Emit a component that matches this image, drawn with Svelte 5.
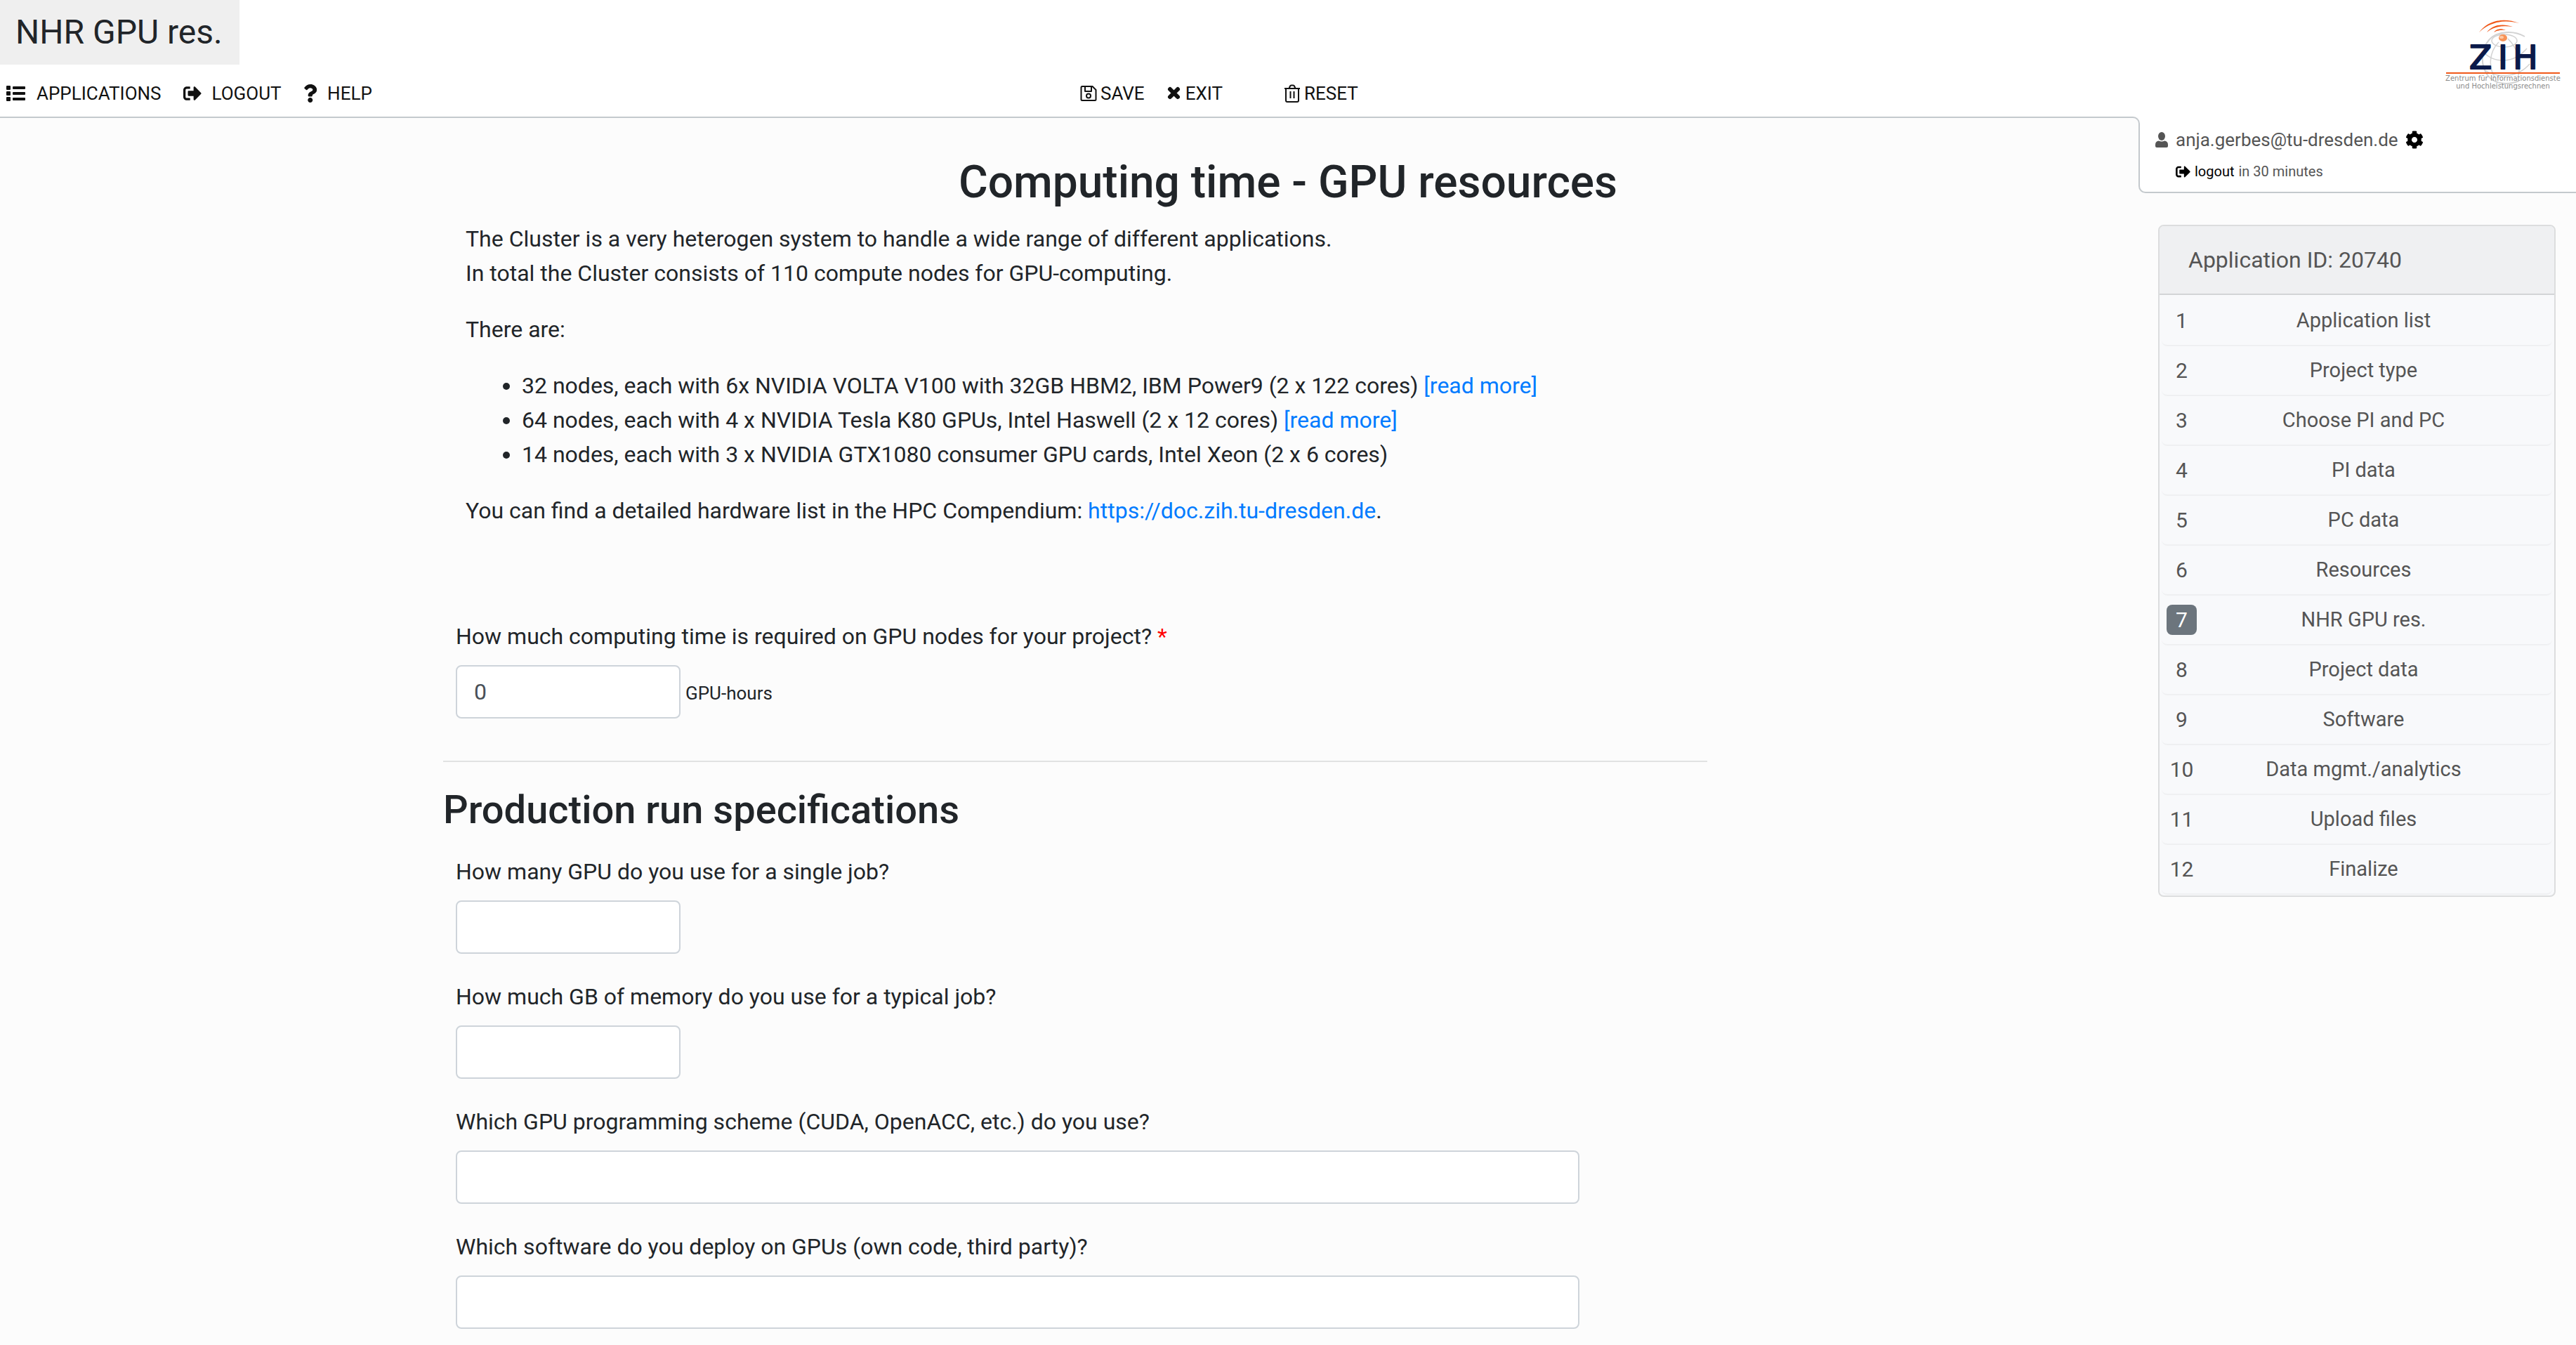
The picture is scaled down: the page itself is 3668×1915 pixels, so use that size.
<script lang="ts">
  const steps = [
    'Application list',
    'Project type',
    'Choose PI and PC',
    'PI data',
    'PC data',
    'Resources',
    'NHR GPU res.',
    'Project data',
    'Software',
    'Data mgmt./analytics',
    'Upload files',
    'Finalize'
  ];
  const current = 7;

  let gpuHours = $state('0');

  const questions = [
    { id: 'gpus', text: 'How many GPU do you use for a single job?', wide: false },
    { id: 'memory', text: 'How much GB of memory do you use for a typical job?', wide: false },
    { id: 'scheme', text: 'Which GPU programming scheme (CUDA, OpenACC, etc.) do you use?', wide: true },
    { id: 'software', text: 'Which software do you deploy on GPUs (own code, third party)?', wide: true }
  ];
</script>

{#snippet signOut()}
  <svg class="icon" viewBox="0 0 512 512" aria-hidden="true">
    <path d="M497 273L329 441c-15 15-41 4.5-41-17v-96H152c-13.3 0-24-10.7-24-24v-96c0-13.3 10.7-24 24-24h136V88c0-21.4 25.9-32 41-17l168 168c9.3 9.4 9.3 24.6 0 34zM192 436v-40c0-6.6-5.4-12-12-12H96c-17.7 0-32-14.3-32-32V160c0-17.7 14.3-32 32-32h84c6.6 0 12-5.4 12-12V76c0-6.6-5.4-12-12-12H96c-53 0-96 43-96 96v192c0 53 43 96 96 96h84c6.6 0 12-5.4 12-12z" />
  </svg>
{/snippet}

<header class="top">
  <div class="bar">
    <div class="title">NHR GPU res.</div>
    <div class="tools">
      <nav class="menu">
        <a href="#applications">
          <svg class="icon list" viewBox="0 0 28 26" aria-hidden="true">
            <rect x="0" y="2" width="6" height="6" rx="1" /><rect x="0" y="10" width="6" height="6" rx="1" /><rect x="0" y="18" width="6" height="6" rx="1" />
            <rect x="9" y="3" width="18" height="4" rx="1" /><rect x="9" y="11" width="18" height="4" rx="1" /><rect x="9" y="19" width="18" height="4" rx="1" />
          </svg>APPLICATIONS</a>
        <a href="#logout">{@render signOut()}LOGOUT</a>
        <a href="#help">
          <svg class="icon" viewBox="0 0 384 512" aria-hidden="true">
            <path d="M202.021 0C122.202 0 70.503 32.703 29.914 91.026c-7.363 10.58-5.093 25.086 5.178 32.874l43.138 32.709c10.373 7.865 25.132 6.026 33.253-4.148 25.049-31.381 43.63-49.449 82.757-49.449 30.764 0 68.816 19.799 68.816 49.631 0 22.552-18.617 34.134-48.993 51.164-35.423 19.86-82.299 44.576-82.299 106.405V320c0 13.255 10.745 24 24 24h72.471c13.255 0 24-10.745 24-24v-5.773c0-42.86 125.268-44.645 125.268-160.627C377.504 66.256 286.902 0 202.021 0zM192 373.459c-38.196 0-69.271 31.075-69.271 69.271 0 38.195 31.075 69.27 69.271 69.27s69.271-31.075 69.271-69.271-31.075-69.27-69.271-69.27z" />
          </svg>HELP</a>
      </nav>
      <div class="actions">
        <button type="button">
          <svg class="glyph" viewBox="0 0 24 26" fill="none" stroke="currentColor" stroke-width="2" stroke-linejoin="round" aria-hidden="true">
            <path d="M3 3h14.500l5 5v13.500q0 1.500-1.500 1.500h-18q-1.500 0-1.500-1.500v-17q0-1.500 1.500-1.500z" />
            <path d="M7 3v7h9v-7" />
            <circle cx="12" cy="16.500" r="3" />
          </svg>SAVE</button>
        <button type="button">
          <svg class="glyph" viewBox="0 0 22 26" fill="none" stroke="currentColor" stroke-width="6" stroke-linecap="round" aria-hidden="true">
            <path d="M5 7l11 11M16 7l-11 11" />
          </svg>EXIT</button>
        <button type="button" class="reset">
          <svg class="glyph" viewBox="0 0 24 26" fill="none" stroke="currentColor" stroke-width="2" stroke-linejoin="round" aria-hidden="true">
            <path d="M1 6h22M7.500 6l1.500-3.500q.5-1 1.500-1h3q1 0 1.500 1l1.500 3.500M3 6v17q0 2 2 2h14q2 0 2-2v-17M9.500 10v10M14.500 10v10" />
          </svg>RESET</button>
      </div>
    </div>
  </div>
  <svg class="logo" viewBox="0 0 228 150" role="img" aria-label="ZIH">
    <g fill="none" stroke="#d2d2d2" stroke-width="1.500">
      <path d="M155 52c-16-9-40-8-51 5-12 14-12 36-2 50 8 11 26 16 45 8" stroke-width="2" />
      <path d="M118 60c-14 14-15 36-5 51" />
      <path d="M131 55c14 14 19 32 15 52" />
      <path d="M98 76c14 13 40 16 60-7M97 99c18 13 48 12 65-8" />
      <ellipse cx="126" cy="58" rx="18" ry="9" />
    </g>
    <g fill="#f0591a">
      <path d="M90 46c14-18 36-21 57-13-20-5-40-3-57 13z" />
      <path d="M101 46c9-11 22-13 37-8-14-2-26-1-37 8z" />
      <path d="M111 46c4-5 10-6 17-3-6-1-11 0-17 3z" />
    </g>
    <ellipse cx="124" cy="54" rx="6" ry="5" fill="#f79256" />
    <ellipse cx="122" cy="53" rx="3" ry="2" fill="#fdc9a4" />
    <text class="mark" x="92 124 156" y="98">ZIH</text>
    <rect x="43" y="103" width="162" height="2" fill="#f0591a" />
    <text class="sub" x="124" y="115">Zentrum für Informationsdienste</text>
    <text class="sub" x="124" y="126">und Hochleistungsrechnen</text>
  </svg>
</header>

<div class="page">
  <div class="edge"></div>

  <main>
    <h1>Computing time - GPU resources</h1>
    <div class="intro">
      <p>
        The Cluster is a very heterogen system to handle a wide range of different applications.<br />
        In total the Cluster consists of 110 compute nodes for GPU-computing.
      </p>
      <p>There are:</p>
      <ul>
        <li>32 nodes, each with 6x NVIDIA VOLTA V100 with 32GB HBM2, IBM Power9 (2 x 122 cores) <a href="#power9">[read more]</a></li>
        <li>64 nodes, each with 4 x NVIDIA Tesla K80 GPUs, Intel Haswell (2 x 12 cores) <a href="#haswell">[read more]</a></li>
        <li>14 nodes, each with 3 x NVIDIA GTX1080 consumer GPU cards, Intel Xeon (2 x 6 cores)</li>
      </ul>
      <p>You can find a detailed hardware list in the HPC Compendium: <a href="#compendium">https://doc.zih.tu-dresden.de</a>.</p>
    </div>

    <form>
      <div class="field">
        <label for="hours">How much computing time is required on GPU nodes for your project? <span class="required">*</span></label>
        <div class="with-unit">
          <input id="hours" type="text" bind:value={gpuHours} />
          <span class="unit">GPU-hours</span>
        </div>
      </div>
      <hr />
      <h2>Production run specifications</h2>
      {#each questions as q (q.id)}
        <div class="field">
          <label for={q.id}>{q.text}</label>
          <input id={q.id} type="text" class:wide={q.wide} />
        </div>
      {/each}
    </form>
  </main>

  <aside>
    <div class="cover"></div>
    <div class="user">
      <div class="account">
        <svg class="person" viewBox="0 0 20 24" aria-hidden="true">
          <ellipse cx="10" cy="7" rx="5" ry="6" />
          <path d="M1 21v-2q0-5 5-5.500q4 2 8 0q5 .5 5 5.500v2q0 2-2 2h-14q-2 0-2-2z" />
        </svg>
        <span>anja.gerbes@tu-dresden.de</span>
        <a href="#settings" aria-label="Settings">
          <svg class="cog" viewBox="0 0 512 512" aria-hidden="true">
            <path d="M487.4 315.7l-42.6-24.6c4.3-23.2 4.3-47 0-70.2l42.6-24.6c4.9-2.8 7.1-8.6 5.5-14-11.1-35.6-30-67.8-54.7-94.6-3.8-4.1-10-5.1-14.8-2.3L380.8 110c-17.9-15.4-38.5-27.3-60.8-35.1V25.8c0-5.6-3.9-10.5-9.4-11.7-36.7-8.2-74.3-7.8-109.2 0-5.5 1.2-9.400 6.100-9.400 11.700V75c-22.200 7.900-42.800 19.800-60.800 35.100L88.700 85.500c-4.900-2.800-11-1.900-14.800 2.300-24.700 26.700-43.600 58.900-54.700 94.600-1.700 5.400.6 11.200 5.500 14L67.300 221c-4.300 23.200-4.300 47 0 70.200l-42.600 24.600c-4.900 2.800-7.100 8.600-5.500 14 11.100 35.600 30 67.800 54.700 94.600 3.800 4.100 10 5.100 14.800 2.300l42.600-24.600c17.900 15.400 38.500 27.300 60.800 35.100v49.200c0 5.600 3.900 10.500 9.400 11.700 36.700 8.200 74.300 7.800 109.200 0 5.500-1.200 9.400-6.100 9.400-11.700v-49.200c22.200-7.900 42.800-19.800 60.800-35.100l42.600 24.600c4.900 2.800 11 1.900 14.800-2.300 24.700-26.700 43.600-58.900 54.700-94.600 1.500-5.500-.7-11.300-5.600-14.100zM256 336c-44.100 0-80-35.900-80-80s35.900-80 80-80 80 35.900 80 80-35.900 80-80 80z" />
          </svg>
        </a>
      </div>
      <div class="session"><a href="#logout">{@render signOut()}logout</a><span>in 30 minutes</span></div>
    </div>

    <section class="card">
      <h3>Application ID: 20740</h3>
      <ol>
        {#each steps as step, i (step)}
          <li>
            <a href="#step-{i + 1}">
              <span class="num" class:active={i + 1 === current}>{i + 1}</span>
              <span class="name">{step}</span>
            </a>
          </li>
        {/each}
      </ol>
    </section>
  </aside>
</div>

<style>
  :global(body) {
    background: #fcfcfc;
    color: #212529;
    font-family: Roboto, 'Liberation Sans', sans-serif;
    font-size: 32px;
    line-height: 49px;
  }
  a {
    color: #007bff;
    text-decoration: none;
  }

  /* Header */
  .top {
    display: flex;
    height: 166px;
    background: #fff;
  }
  .bar {
    flex: 1;
    min-width: 0;
    margin-right: -228px;
  }
  .title {
    width: fit-content;
    padding: 0 24px 0 22px;
    background: #efefef;
    font-size: 48px;
    line-height: 92px;
  }
  .tools {
    display: grid;
    grid-template-columns: 1538fr 2130fr;
    align-items: center;
    height: 82px;
    font-size: 26px;
    line-height: 40px;
  }
  .menu,
  .actions {
    display: flex;
    align-items: center;
  }
  .menu {
    gap: 31px;
    padding-left: 9px;
  }
  .menu a {
    display: flex;
    align-items: center;
    gap: 15px;
    color: #111;
  }
  .actions {
    gap: 31px;
  }
  .actions button {
    display: flex;
    align-items: center;
    gap: 5px;
    padding: 0;
    border: 0;
    background: none;
    color: #111;
    font: inherit;
  }
  .actions .reset {
    margin-left: 56px;
  }
  .icon {
    height: 26px;
    fill: currentColor;
  }
  .glyph {
    height: 26px;
  }
  .logo {
    flex: none;
    width: 228px;
    height: 150px;
  }
  .mark {
    fill: #0b1a4a;
    stroke: #0b1a4a;
    stroke-width: 2px;
    stroke-linejoin: round;
    font-family: 'DejaVu Sans', sans-serif;
    font-size: 47px;
    text-anchor: middle;
  }
  .sub {
    fill: #8a8a8a;
    font-family: 'DejaVu Sans', sans-serif;
    font-size: 10px;
    text-anchor: middle;
  }

  /* Page grid */
  .page {
    display: grid;
    grid-template-columns: 631fr 2414fr 623fr;
    align-items: start;
  }
  .edge {
    position: relative;
    grid-area: 1 / 1 / 2 / 3;
    height: 12px;
    margin-right: -2px;
    border: solid #c4c9cd;
    border-width: 2px 2px 0 0;
    border-top-right-radius: 10px;
    background: #fcfcfc;
  }
  main {
    position: relative;
    grid-area: 1 / 2 / 2 / 3;
    min-width: 0;
    padding: 55px 8px 25px 0;
  }
  h1,
  h2 {
    margin: 0;
    font-weight: 500;
  }
  h1 {
    font-size: 64px;
    line-height: 77px;
    text-align: center;
  }
  .intro {
    padding: 18px 32px 0;
  }
  .intro p,
  .intro ul {
    margin: 0 0 31px;
  }
  .intro ul {
    padding-left: 80px;
  }

  /* Form */
  form {
    padding-top: 99px;
  }
  .field {
    display: flex;
    flex-direction: column;
    gap: 16px;
    margin-bottom: 37px;
    padding-left: 18px;
  }
  .required {
    color: #f00;
  }
  .with-unit {
    display: flex;
    align-items: baseline;
    gap: 7px;
  }
  .unit {
    font-size: 26px;
  }
  input {
    box-sizing: border-box;
    width: 320px;
    height: 76px;
    padding: 0 24px;
    border: 2px solid #ced4da;
    border-radius: 8px;
    background: #fff;
    color: #495057;
    font: inherit;
  }
  input.wide {
    width: 1600px;
    max-width: 100%;
  }
  hr {
    width: 1800px;
    max-width: 100%;
    height: 2px;
    margin: 60px 0 35px;
    border: 0;
    background: #e1e2e2;
  }
  h2 {
    margin-bottom: 30px;
    font-size: 56px;
    line-height: 67px;
  }

  /* User panel */
  aside {
    grid-area: 1 / 3 / 2 / 4;
    color: #555;
  }
  .cover {
    height: 12px;
    background: #fff;
  }
  .user {
    box-sizing: border-box;
    height: 97px;
    padding: 1px 0 0 21px;
    border: solid #c4c9cd;
    border-width: 0 0 2px 2px;
    border-bottom-left-radius: 10px;
    background: #fff;
    font-size: 26px;
    line-height: 40px;
  }
  .account {
    display: flex;
    align-items: center;
    gap: 10px;
  }
  .account a,
  .session a {
    display: flex;
    align-items: center;
    gap: 6px;
    color: #000;
  }
  .person {
    width: 20px;
    height: 24px;
    fill: #555;
  }
  .cog {
    width: 26px;
    height: 26px;
  }
  .session {
    display: flex;
    align-items: center;
    gap: 6px;
    padding: 5px 0 0 30px;
    font-size: 20px;
  }
  .session .icon {
    height: 21px;
  }

  /* Step list */
  .card {
    margin: 45px 29px 0 28px;
    border: 2px solid #dcddde;
    border-radius: 8px;
    background: #f8f9fb;
    overflow: hidden;
  }
  h3 {
    margin: 0;
    padding: 0 41px;
    border-bottom: 2px solid #d3d5d7;
    background: #eff0f2;
    font-size: 32px;
    font-weight: 400;
    line-height: 96px;
  }
  ol {
    margin: 0;
    padding: 2px 3px 1px;
    list-style: none;
  }
  ol a {
    box-sizing: border-box;
    display: grid;
    grid-template-columns: 57px 1fr;
    align-items: center;
    height: 71px;
    padding-right: 38px;
    border-bottom: 2px solid #eff0f2;
    border-radius: 8px;
    color: inherit;
    font-size: 29px;
    line-height: 43px;
  }
  .num {
    justify-self: center;
    min-width: 43px;
    border-radius: 8px;
    font-size: 30px;
    text-align: center;
  }
  .num.active {
    background: #6c757d;
    color: #fff;
  }
  .name {
    text-align: center;
  }
</style>
